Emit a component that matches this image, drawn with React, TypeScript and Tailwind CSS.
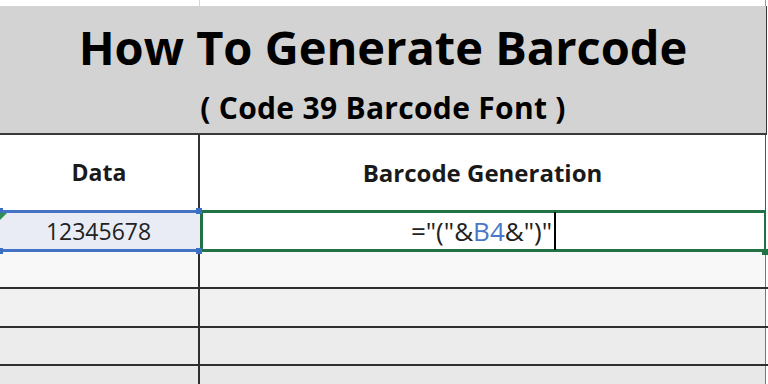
const FONT = { fontFamily: "'Open Sans', Lato, sans-serif" };

function Handle({ className }: { className: string }) {
  return <div className={`absolute w-[6px] h-[6px] bg-[#3b6fc4] ${className}`} />;
}

export default function App() {
  return (
    <div className="w-[768px] h-[384px] overflow-hidden bg-white relative" style={FONT}>
      {/* top strip of the previous row */}
      <div className="h-[6px] flex">
        <div className="w-[200px] border-r border-[#d8d8d8]" />
        <div className="w-[566px] border-r border-[#9a9a9a]" />
      </div>

      {/* merged title cell */}
      <div className="w-[767px] h-[129px] bg-[#d3d3d3] border-b-2 border-r border-[#3a3a3a] flex flex-col items-center">
        <div className="text-[47px] font-bold text-black leading-none mt-[18px]">
          How To Generate Barcode
        </div>
        <div className="text-[30px] font-bold text-black leading-none mt-[22px] tracking-[0.3px]">
          ( Code 39 Barcode Font )
        </div>
      </div>

      {/* column headers */}
      <div className="h-[75px] flex">
        <div className="w-[200px] border-r-2 border-[#333] flex items-center justify-center text-[23px] font-bold text-[#1a1a1a]">
          Data
        </div>
        <div className="w-[566px] border-r border-[#555] flex items-center justify-center text-[24px] font-bold text-[#1a1a1a]">
          Barcode Generation
        </div>
      </div>

      {/* selected row */}
      <div className="h-[42px] flex relative">
        <div className="w-[200px] bg-[#e9ecf4] border-y-[3px] border-[#4472c4] flex items-center justify-center pr-[3px] text-[23px] text-[#222]">
          12345678
        </div>
        <div className="w-[566px] border-y-[3px] border-l-[3px] border-r-2 border-[#217346] flex items-center justify-center text-[26px] text-[#222]">
          <span>
            ="("&amp;<span className="text-[#4a78c8]">B4</span>&amp;")"
          </span>
          <span className="w-[2px] h-[38px] bg-black ml-[2px]" />
        </div>
        <Handle className="left-[-3px] top-[-2px]" />
        <Handle className="left-[196px] top-[-2px]" />
        <Handle className="left-[-3px] bottom-[-2px]" />
        <Handle className="left-[196px] bottom-[-2px]" />
        <div className="absolute left-0 top-[3px] w-0 h-0 border-t-[7px] border-r-[7px] border-t-[#2f8f4e] border-r-transparent" />
        <div className="absolute left-[762px] bottom-[-3px] w-[6px] h-[6px] bg-[#217346]" />
      </div>

      {/* empty rows */}
      {[
        { h: "h-[37px]", bg: "bg-[#f8f8f8]" },
        { h: "h-[39px]", bg: "bg-[#f1f1f1]" },
        { h: "h-[38px]", bg: "bg-[#ececec]" },
        { h: "h-[20px]", bg: "bg-[#e8e8e8]" },
      ].map((r, i) => (
        <div key={i} className={`${r.h} flex ${i < 3 ? "border-b-2 border-[#2e2e2e]" : ""}`}>
          <div className={`w-[200px] ${r.bg} border-r-2 border-[#2e2e2e]`} />
          <div className={`w-[566px] ${r.bg} border-r border-[#777]`} />
        </div>
      ))}
    </div>
  );
}
